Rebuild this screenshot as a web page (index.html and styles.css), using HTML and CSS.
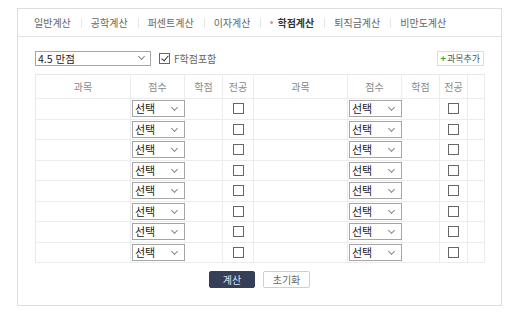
FILE: index.html
```html
<!DOCTYPE html>
<html lang="ko">
<head>
    <meta charset="UTF-8" />
    <title>학점계산</title>
    <link rel="stylesheet" href="styles.css">
</head>
<body>
    <div class="calc-box">
        <ul class="tabs">
            <li>일반계산</li>
            <li>공학계산</li>
            <li>퍼센트계산</li>
            <li>이자계산</li>
            <li class="active"><span class="dot"></span>학점계산</li>
            <li>퇴직금계산</li>
            <li>비만도계산</li>
        </ul>

        <div class="content">
            <div class="toolbar">
                <span class="sel scale">
                    <select><option>4.5 만점</option></select>
                </span>
                <label class="f-check"><input type="checkbox" checked> F학점포함</label>
                <button class="add-btn"><span class="plus">+</span>과목추가</button>
            </div>

            <table class="grade-table">
                <colgroup>
                    <col style="width:95px"><col style="width:54px"><col style="width:38px"><col style="width:31px">
                    <col style="width:94px"><col style="width:54px"><col style="width:38px"><col style="width:28px">
                    <col style="width:17px">
                </colgroup>
                <thead>
                    <tr>
                        <th>과목</th><th>점수</th><th>학점</th><th>전공</th>
                        <th>과목</th><th>점수</th><th>학점</th><th>전공</th><th></th>
                    </tr>
                </thead>
                <tbody id="rows"></tbody>
            </table>

            <div class="actions">
                <button class="btn-calc">계산</button>
                <button class="btn-reset">초기화</button>
            </div>
        </div>
    </div>

    <script>
        const rows = document.getElementById('rows');
        const half = `
            <td></td>
            <td><span class="sel"><select><option>선택</option></select></span></td>
            <td></td>
            <td class="c"><input type="checkbox"></td>`;

        for (let i = 0; i < 8; i++) {
            const tr = document.createElement('tr');
            tr.innerHTML = half + half + '<td></td>';
            rows.appendChild(tr);
        }
    </script>
</body>
</html>
```

FILE: styles.css
```css
body {
    margin: 8px 0 0 17px;
    font-family: "Noto Sans CJK KR", "Noto Sans", sans-serif;
    background: #fff;
    color: #333;
}

.calc-box {
    width: 483px;
    height: 296px;
    border: 1px solid #dedede;
}

.tabs {
    list-style: none;
    margin: 0;
    padding: 0 0 0 16px;
    height: 27px;
    border-bottom: 1px solid #e3e3e3;
    display: flex;
    align-items: center;
}

.tabs li {
    font-size: 10px;
    color: #666;
    padding: 0 10px;
    position: relative;
    line-height: 14px;
}

.tabs li:first-child {
    padding-left: 0;
}

.tabs li + li::before {
    content: "";
    position: absolute;
    left: 0;
    top: 2px;
    width: 1px;
    height: 10px;
    background: #e6e6e6;
}

.tabs li.active {
    color: #333;
    font-weight: bold;
}

.dot {
    display: inline-block;
    width: 3px;
    height: 3px;
    border-radius: 50%;
    background: #d99;
    margin: 0 4px 2px 0;
    vertical-align: middle;
}

.content {
    padding: 14px 17px 0 17px;
}

.toolbar {
    display: flex;
    align-items: center;
    height: 15px;
    margin-bottom: 8px;
}

.sel {
    position: relative;
    display: block;
}

.sel select {
    -webkit-appearance: none;
    appearance: none;
    display: block;
    font-family: "Noto Sans CJK KR", sans-serif;
    font-size: 11px;
    color: #222;
    background: #fff;
    border: 1px solid #a6a6a6;
    border-radius: 0;
    padding: 0 0 0 2px;
    margin: 0;
    outline: none;
}

.sel::after {
    content: "";
    position: absolute;
    right: 9px;
    top: 4px;
    width: 4px;
    height: 4px;
    border-right: 1px solid #888;
    border-bottom: 1px solid #888;
    transform: rotate(45deg);
    pointer-events: none;
}

.scale select {
    width: 116px;
    height: 15px;
    line-height: 13px;
    font-size: 10.5px;
}

.scale::after {
    top: 3px;
    right: 7px;
}

.f-check {
    display: flex;
    align-items: center;
    margin-left: 8px;
    font-size: 10px;
    color: #666;
}

input[type="checkbox"] {
    -webkit-appearance: none;
    appearance: none;
    display: inline-block;
    width: 11px;
    height: 11px;
    border: 1px solid #666;
    background: #fff;
    margin: 0 4px 0 0;
    position: relative;
    vertical-align: middle;
}

input[type="checkbox"]:checked::after {
    content: "";
    position: absolute;
    left: 3px;
    top: 0px;
    width: 3px;
    height: 6px;
    border-right: 1px solid #333;
    border-bottom: 1px solid #333;
    transform: rotate(40deg);
}

.add-btn {
    margin-left: auto;
    height: 15px;
    padding: 0 3px;
    border: 1px solid #ddd;
    background: #fff;
    font-family: "Noto Sans CJK KR", sans-serif;
    font-size: 9px;
    color: #555;
    line-height: 13px;
}

.plus {
    color: #3a3;
    font-weight: bold;
    margin-right: 1px;
}

.grade-table {
    width: 449px;
    table-layout: fixed;
    border-collapse: collapse;
    border: 1px solid #e8e8e8;
}

.grade-table th {
    height: 23px;
    font-size: 10px;
    font-weight: normal;
    color: #888;
    border-right: 1px solid #ececec;
    border-bottom: 1px solid #ececec;
    padding: 0;
}

.grade-table td {
    height: 19.5px;
    padding: 0;
    font-size: 0;
    line-height: 0;
    border-right: 1px solid #ececec;
    border-bottom: 1px solid #ececec;
    vertical-align: middle;
}

.grade-table td .sel {
    margin-left: 1px;
    width: 53px;
}

.grade-table td select {
    width: 53px;
    height: 17px;
    line-height: 15px;
}

.grade-table td .sel::after {
    top: 5px;
    right: 8px;
}

.grade-table td.c {
    text-align: center;
}

.grade-table td.c input {
    margin: 0;
}

.actions {
    display: flex;
    justify-content: center;
    gap: 8px;
    margin-top: 8px;
}

.actions button {
    height: 17px;
    font-family: "Noto Sans CJK KR", sans-serif;
    font-size: 10px;
    line-height: 15px;
    border-radius: 2px;
    padding: 0;
}

.btn-calc {
    width: 46px;
    background: #363f58;
    border: 1px solid #363f58;
    color: #dfe3ee;
}

.btn-reset {
    width: 47px;
    background: #fff;
    border: 1px solid #cfcfcf;
    color: #666;
}
```
